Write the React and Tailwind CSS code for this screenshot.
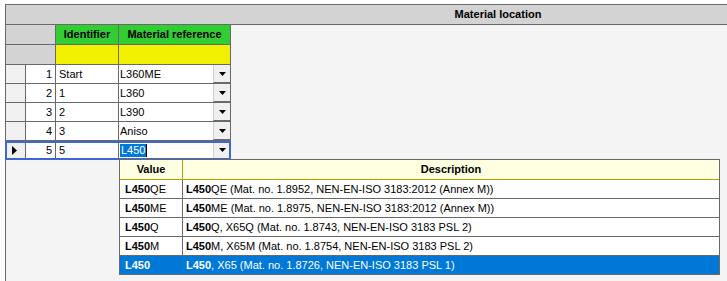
import React from 'react';

const rows = [
  { n: 1, id: 'Start', mat: 'L360ME' },
  { n: 2, id: '1', mat: 'L360' },
  { n: 3, id: '2', mat: 'L390' },
  { n: 4, id: '3', mat: 'Aniso' },
];

const options = [
  { v: 'QE', d: 'QE (Mat. no. 1.8952, NEN-EN-ISO 3183:2012 (Annex M))' },
  { v: 'ME', d: 'ME (Mat. no. 1.8975, NEN-EN-ISO 3183:2012 (Annex M))' },
  { v: 'Q', d: 'Q, X65Q (Mat. no. 1.8743, NEN-EN-ISO 3183 PSL 2)' },
  { v: 'M', d: 'M, X65M (Mat. no. 1.8754, NEN-EN-ISO 3183 PSL 2)' },
  { v: '', d: ', X65 (Mat. no. 1.8726, NEN-EN-ISO 3183 PSL 1)', selected: true },
];

function DropButton() {
  return (
    <div className="w-[17px] h-full bg-[#f0f0f0] border-l border-[#d0d0d0] border-b border-b-[#696969] flex items-center justify-center">
      <svg width="7" height="4" viewBox="0 0 7 4">
        <path d="M0 0h7L3.5 4z" fill="#000" />
      </svg>
    </div>
  );
}

function Row({ n, id, mat }) {
  return (
    <div className="flex h-[19px] border-b border-[#696969]">
      <div className="w-[20px] border-r border-[#696969] bg-[#f0f0f0]" />
      <div className="w-[30px] border-r border-[#696969] bg-white text-right pr-[3px] leading-[18px]">{n}</div>
      <div className="w-[63px] border-r border-[#696969] bg-white pl-[3px] leading-[18px]">{id}</div>
      <div className="w-[112px] border-r border-[#696969] bg-white flex">
        <div className="flex-1 pl-[1px] leading-[18px]">{mat}</div>
        <DropButton />
      </div>
    </div>
  );
}

export default function App() {
  return (
    <div className="w-[727px] h-[281px] bg-white overflow-hidden relative text-[11px] text-black font-['Liberation_Sans',Arial,sans-serif]">
      <div className="ml-[5px] mt-[4px] h-[277px] border-l border-t border-[#696969] bg-[#f4f4f4]">
        {/* group header bar */}
        <div className="h-[20px] bg-[#d3d3d3] border-b border-[#696969] flex overflow-hidden">
          <div className="w-[225px] shrink-0" />
          <div className="w-[534px] shrink-0 text-center font-bold leading-[19px]">Material location</div>
        </div>

        {/* column headers */}
        <div className="flex h-[20px] w-fit border-b border-[#696969]">
          <div className="w-[50px] border-r border-[#696969] bg-[#d3d3d3]" />
          <div className="w-[63px] border-r border-[#696969] bg-[#32cd32] text-center font-bold leading-[19px]">Identifier</div>
          <div className="w-[112px] border-r border-[#696969] bg-[#32cd32] text-center font-bold leading-[19px]">Material reference</div>
        </div>

        {/* filter row */}
        <div className="flex h-[20px] w-fit border-b border-[#696969]">
          <div className="w-[50px] border-r border-[#696969] bg-[#d3d3d3]" />
          <div className="w-[63px] border-r border-[#696969] bg-[#f0f000]" />
          <div className="w-[112px] border-r border-[#696969] bg-[#f0f000]" />
        </div>

        <div className="w-fit">
          {rows.map((r) => (
            <Row key={r.n} {...r} />
          ))}

          {/* current row */}
          <div className="relative flex h-[19px]">
            <div className="w-[20px] border-r border-[#696969] bg-[#f0f0f0] flex items-center pl-[6px]">
              <svg width="5" height="9" viewBox="0 0 5 9">
                <path d="M0 0l5 4.5L0 9z" fill="#000" />
              </svg>
            </div>
            <div className="w-[30px] border-r border-[#696969] bg-white text-right pr-[3px] leading-[19px]">5</div>
            <div className="w-[63px] border-r border-[#696969] bg-white pl-[3px] leading-[19px]">5</div>
            <div className="w-[112px] border-r border-[#696969] bg-white flex items-center">
              <div className="flex-1 pl-[1px] flex items-center">
                <span className="bg-[#0078d7] text-white leading-[13px] px-[1px]">L450</span>
                <span className="w-[1px] h-[13px] bg-black" />
              </div>
              <div className="h-[17px] flex">
                <DropButton />
              </div>
            </div>
            <div className="absolute top-0 bottom-0 left-[-1px] right-0 border-2 border-[#3f67d3] pointer-events-none" />
          </div>
        </div>
      </div>

      {/* dropdown list */}
      <div className="absolute left-[119px] top-[159px] w-[601px] border border-[#696969] bg-white">
        <div className="flex h-[20px] bg-[#ffffe1] border-b border-[#a8a800]">
          <div className="w-[63px] border-r border-[#a8a800] text-center font-bold leading-[19px]">Value</div>
          <div className="flex-1 text-center font-bold leading-[19px]">Description</div>
        </div>
        {options.map((o, i) => (
          <div
            key={i}
            className={
              o.selected
                ? 'flex h-[18px] bg-[#0078d7] text-white'
                : 'flex h-[19px] border-b border-[#696969]'
            }
          >
            <div className={o.selected ? 'w-[63px] pl-[5px] leading-[18px]' : 'w-[63px] border-r border-[#696969] pl-[5px] leading-[18px]'}>
              <span className="font-bold">L450</span>
              {o.v}
            </div>
            <div className="flex-1 pl-[3px] leading-[18px]">
              <span className="font-bold">L450</span>
              {o.d}
            </div>
          </div>
        ))}
      </div>
    </div>
  );
}
